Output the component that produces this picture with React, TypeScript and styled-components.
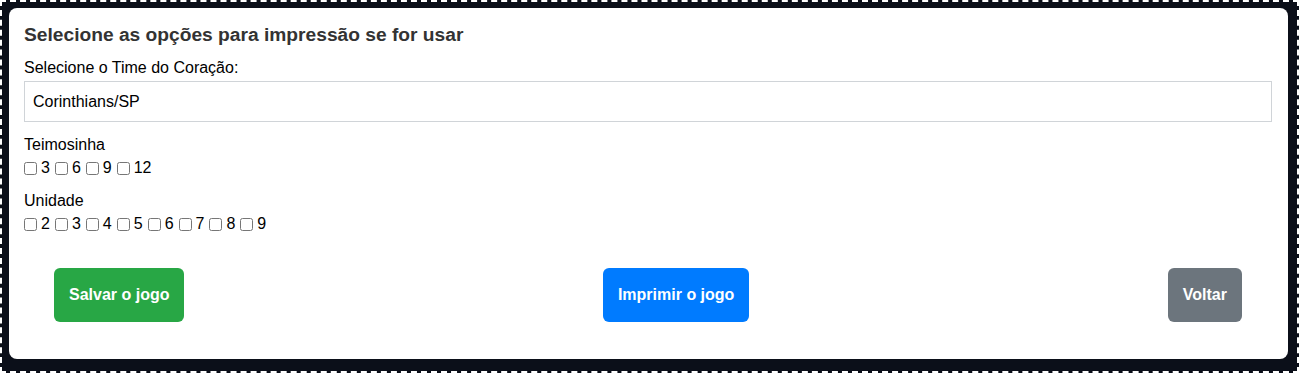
import React from "react";
import styled, { createGlobalStyle } from "styled-components";

const Global = createGlobalStyle`
  html, body { margin: 0; padding: 0; }
  body { font-family: "Liberation Sans", Arial, sans-serif; background: #0b0f19; }
  * { box-sizing: border-box; }
`;

const Frame = styled.div`
  height: 373px;
  border: 2px dashed #ffffff;
  background: #0b0f19;
  padding: 6px 9px 0 7px;
`;

const Card = styled.div`
  background: #ffffff;
  border-radius: 8px;
  height: 351px;
  padding: 14px 16px 0 15px;
  color: #000;
`;

const Title = styled.h2`
  margin: 0 0 10px 0;
  font-size: 19.2px;
  font-weight: 700;
  color: #333333;
  line-height: 26px;
`;

const Label = styled.div`
  font-size: 16px;
  line-height: 20px;
  margin-bottom: 3px;
`;

const Select = styled.div`
  height: 41px;
  border: 1px solid #d0d4d8;
  display: flex;
  align-items: center;
  padding: 0 8px;
  font-size: 16px;
  margin-bottom: 13px;
`;

const Group = styled.div`
  margin-bottom: 13px;
`;

const Checks = styled.div`
  display: flex;
  align-items: center;
  font-size: 16px;
  line-height: 20px;
`;

const CheckItem = styled.label`
  display: inline-flex;
  align-items: center;
  margin-right: 5px;
  input {
    margin: 0 4px 0 0;
    width: 13px;
    height: 13px;
  }
`;

const Actions = styled.div`
  display: flex;
  justify-content: space-between;
  padding: 21px 30px 0 30px;
`;

const Button = styled.button<{ $bg: string }>`
  background: ${(p) => p.$bg};
  color: #fff;
  border: none;
  border-radius: 6px;
  height: 54px;
  padding: 0 15px;
  font-family: "Liberation Sans", Arial, sans-serif;
  font-weight: 700;
  font-size: 16px;
`;

const Check = ({ n }: { n: number }) => (
  <CheckItem>
    <input type="checkbox" />
    {n}
  </CheckItem>
);

export default function App() {
  return (
    <>
      <Global />
      <Frame>
        <Card>
          <Title>Selecione as opções para impressão se for usar</Title>
          <Label>Selecione o Time do Coração:</Label>
          <Select>Corinthians/SP</Select>
          <Group>
            <Label>Teimosinha</Label>
            <Checks>
              {[3, 6, 9, 12].map((n) => (
                <Check key={n} n={n} />
              ))}
            </Checks>
          </Group>
          <Group>
            <Label>Unidade</Label>
            <Checks>
              {[2, 3, 4, 5, 6, 7, 8, 9].map((n) => (
                <Check key={n} n={n} />
              ))}
            </Checks>
          </Group>
          <Actions>
            <Button $bg="#28a745">Salvar o jogo</Button>
            <Button $bg="#007bff">Imprimir o jogo</Button>
            <Button $bg="#6c757d">Voltar</Button>
          </Actions>
        </Card>
      </Frame>
    </>
  );
}
